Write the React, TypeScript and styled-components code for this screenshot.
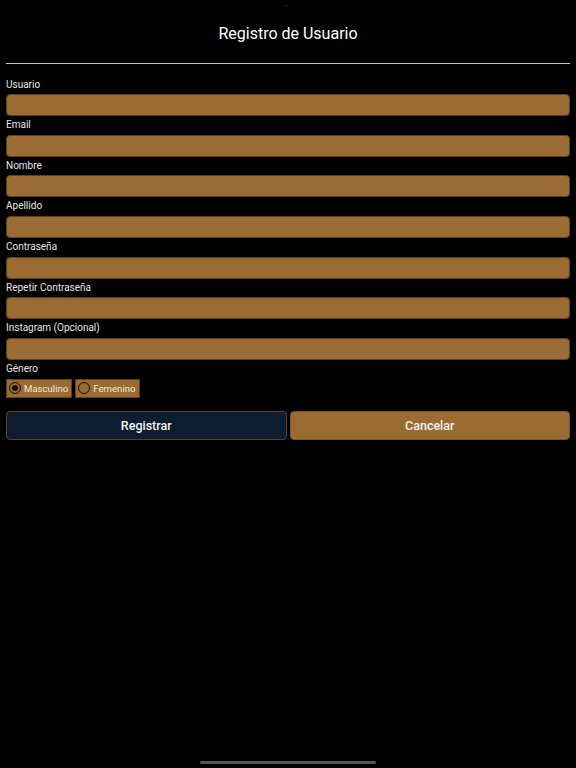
import React, { useState } from 'react';
import styled, { createGlobalStyle } from 'styled-components';

const GlobalStyle = createGlobalStyle`
  html, body {
    margin: 0;
    padding: 0;
    background: #000;
  }
  body {
    font-family: Roboto, "Liberation Sans", Arial, sans-serif;
  }
  * {
    box-sizing: border-box;
  }
`;

const fields = [
  'Usuario',
  'Email',
  'Nombre',
  'Apellido',
  'Contraseña',
  'Repetir Contraseña',
  'Instagram (Opcional)',
];

export default function App() {
  const [gender, setGender] = useState<'m' | 'f'>('m');

  return (
    <Screen>
      <GlobalStyle />
      <Dots>•••</Dots>
      <Title>Registro de Usuario</Title>
      <Divider />
      <Form>
        {fields.map((name) => (
          <Group key={name}>
            <Label>{name}</Label>
            <Input />
          </Group>
        ))}
        <Label>Género</Label>
        <RadioRow>
          <RadioOption onClick={() => setGender('m')}>
            <RadioCircle $checked={gender === 'm'} />
            Masculino
          </RadioOption>
          <RadioOption onClick={() => setGender('f')}>
            <RadioCircle $checked={gender === 'f'} />
            Femenino
          </RadioOption>
        </RadioRow>
        <ButtonRow>
          <Button $variant="primary">Registrar</Button>
          <Button $variant="secondary">Cancelar</Button>
        </ButtonRow>
      </Form>
      <HomeIndicator />
    </Screen>
  );
}

const Screen = styled.div`
  width: 576px;
  height: 768px;
  background: #000;
  display: flex;
  flex-direction: column;
  overflow: hidden;
`;

const Dots = styled.div`
  height: 12px;
  text-align: center;
  font-size: 5px;
  line-height: 12px;
  letter-spacing: 1px;
  color: #2e2e2e;
`;

const Title = styled.h1`
  margin: 11px 0 0 0;
  height: 22px;
  text-align: center;
  font-size: 16px;
  line-height: 22px;
  font-weight: 400;
  color: #fff;
`;

const Divider = styled.hr`
  margin: 18px 6px 0 6px;
  border: none;
  height: 1px;
  background: #c8c8c8;
`;

const Form = styled.div`
  display: flex;
  flex-direction: column;
  padding: 11.5px 6px 0 6px;
`;

const Group = styled.div`
  display: flex;
  flex-direction: column;
`;

const Label = styled.label`
  height: 18.67px;
  font-size: 10px;
  line-height: 18.67px;
  color: #e6e6e6;
`;

const Input = styled.input`
  height: 22px;
  width: 100%;
  margin: 0;
  padding: 0 6px;
  border: 1px solid #5e4220;
  border-radius: 4px;
  background: #9a6b33;
  color: #fff;
  outline: none;
`;

const RadioRow = styled.div`
  display: flex;
  gap: 3px;
  height: 19px;
`;

const RadioOption = styled.div`
  display: flex;
  align-items: center;
  gap: 3px;
  padding: 0 3px 0 2px;
  background: #9a6b33;
  border: 1px solid #5e4220;
  font-size: 9.6px;
  color: #f3e9da;
  cursor: pointer;
`;

const RadioCircle = styled.span<{ $checked: boolean }>`
  width: 12px;
  height: 12px;
  border-radius: 50%;
  border: 1.5px solid #111;
  display: flex;
  align-items: center;
  justify-content: center;

  &::after {
    content: '';
    width: 6px;
    height: 6px;
    border-radius: 50%;
    background: #111;
    display: ${(p) => (p.$checked ? 'block' : 'none')};
  }
`;

const ButtonRow = styled.div`
  display: flex;
  gap: 3px;
  margin-top: 13px;
`;

const Button = styled.button<{ $variant: 'primary' | 'secondary' }>`
  flex: 1;
  height: 29px;
  border-radius: 4px;
  border: 1px solid ${(p) => (p.$variant === 'primary' ? '#5e4220' : '#7a5528')};
  background: ${(p) => (p.$variant === 'primary' ? '#0b1d2f' : '#9a6b33')};
  color: #f2f2f2;
  font-family: Roboto, "Liberation Sans", Arial, sans-serif;
  font-size: 12.5px;
  font-weight: 500;
  cursor: pointer;
`;

const HomeIndicator = styled.div`
  margin: auto auto 4px auto;
  width: 176px;
  height: 3px;
  border-radius: 2px;
  background: #555;
`;
